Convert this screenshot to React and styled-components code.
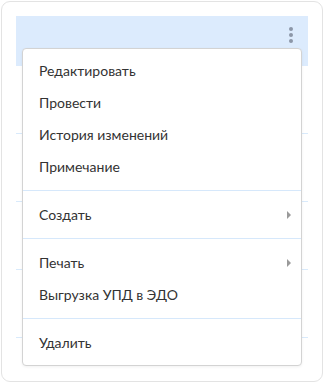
import React from 'react';
import styled, { createGlobalStyle } from 'styled-components';

const GlobalStyle = createGlobalStyle`
  html, body {
    margin: 0;
    padding: 0;
    background: #ffffff;
    font-family: Lato, "Open Sans", "Liberation Sans", sans-serif;
  }
`;

const Card = styled.div`
  position: relative;
  box-sizing: border-box;
  margin: 1px;
  width: 322px;
  height: 381px;
  border: 1px solid #e3e3e3;
  border-radius: 9px;
  padding: 14px 14px 0 14px;
`;

const Row = styled.div`
  box-sizing: border-box;
  height: ${({ $h }) => $h}px;
  background: ${({ $active }) => ($active ? '#dcebfd' : 'transparent')};
  border-bottom: 1px solid ${({ $active }) => ($active ? 'transparent' : '#d9eafb')};
  display: flex;
  align-items: flex-start;
  justify-content: flex-end;
  padding: 11px 14px 0 0;
`;

const Kebab = styled.button`
  border: none;
  background: none;
  padding: 0;
  width: 6px;
  display: flex;
  flex-direction: column;
  gap: 2px;
  align-items: center;
  cursor: pointer;

  span {
    width: 4px;
    height: 4px;
    border-radius: 50%;
    background: #8c97a8;
  }
`;

const Menu = styled.div`
  position: absolute;
  top: 46px;
  left: 20px;
  width: 280px;
  box-sizing: border-box;
  background: #fff;
  border: 1px solid #d3d3d3;
  border-radius: 4px;
  box-shadow: 0 1px 3px rgba(0, 0, 0, 0.06);
  padding: 6px 0;
`;

const Item = styled.div`
  box-sizing: border-box;
  height: 32px;
  display: flex;
  align-items: center;
  justify-content: space-between;
  padding: 0 10px 2px 16px;
  font-size: 14px;
  color: #333333;
  cursor: pointer;

  &:hover {
    background: #f3f8fe;
  }
`;

const Caret = styled.span`
  width: 0;
  height: 0;
  margin-top: 2px;
  border-top: 4px solid transparent;
  border-bottom: 4px solid transparent;
  border-left: 4px solid #9a9a9a;
`;

const Divider = styled.div`
  height: 1px;
  background: #d6e8fb;
  margin: 7px 0 8px;
`;

const groups = [
  [{ label: 'Редактировать' }, { label: 'Провести' }, { label: 'История изменений' }, { label: 'Примечание' }],
  [{ label: 'Создать', sub: true }],
  [{ label: 'Печать', sub: true }, { label: 'Выгрузка УПД в ЭДО' }],
  [{ label: 'Удалить' }],
];

export default function App() {
  return (
    <>
      <GlobalStyle />
      <Card>
        <Row $h={50} $active>
          <Kebab aria-label="Действия">
            <span />
            <span />
            <span />
          </Kebab>
        </Row>
        <Row $h={68} />
        <Row $h={68} />
        <Row $h={68} />
        <Row $h={68} />
        <Menu>
          {groups.map((group, gi) => (
            <React.Fragment key={gi}>
              {gi > 0 && <Divider />}
              {group.map((item) => (
                <Item key={item.label}>
                  {item.label}
                  {item.sub && <Caret />}
                </Item>
              ))}
            </React.Fragment>
          ))}
        </Menu>
      </Card>
    </>
  );
}
